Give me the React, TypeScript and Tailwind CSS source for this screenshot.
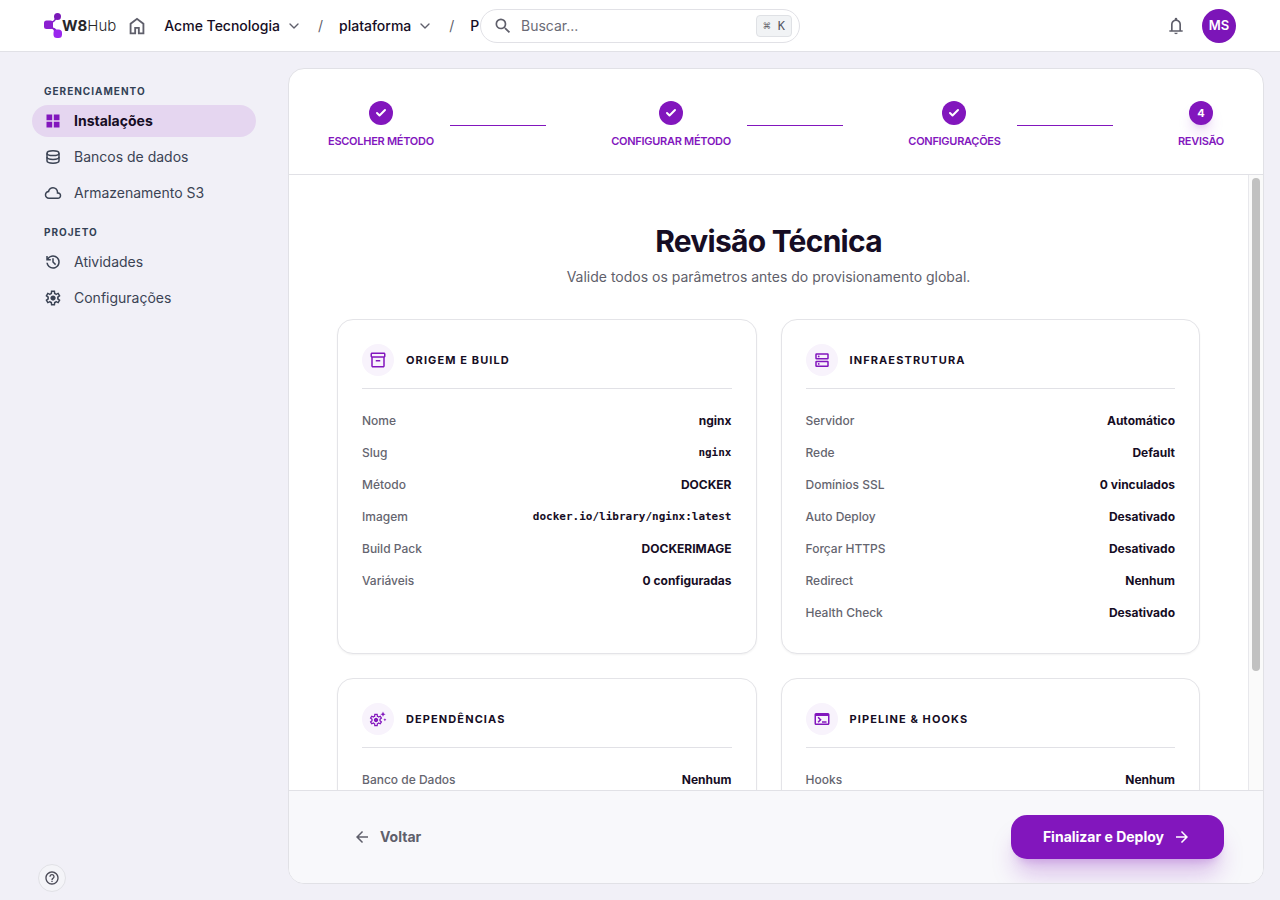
import type { ComponentType, ReactNode } from "react";
import clsx from "clsx";
import { Check, ChevronDown } from "lucide-react";
import {
  MdArrowBack,
  MdArrowForward,
  MdHelpOutline,
  MdOutlineInventory2,
  MdOutlineTerminal,
  MdSearch,
} from "react-icons/md";

interface IconProps {
  className?: string;
}

type IconType = ComponentType<IconProps>;

interface Row {
  label: string;
  value: string;
  mono?: boolean;
}

const gearPath =
  "m370-80-16-128q-13-5-24.5-12T307-235l-119 50L78-375l103-78q-1-7-1-13.5v-27q0-6.5 1-13.5L78-585l110-190 119 50q11-8 23-15t24-12l16-128h220l16 128q13 5 24.5 12t22.5 15l119-50 110 190-103 78q1 7 1 13.5v27q0 6.500-2 13.500l103 78-110 190-118-50q-11 8-23 15t-24 12L590-80H370Zm70-80h79l14-106q31-8 57.500-23.500T639-327l99 41 39-68-86-65q5-14 7-29.500t2-31.500q0-16-2-31.500t-7-29.500l86-65-39-68-99 42q-22-23-48.500-38.500T533-694l-13-106h-79l-14 106q-31 8-57.500 23.500T321-633l-99-41-39 68 86 64q-5 15-7 30t-2 32q0 16 2 31t7 30l-86 65 39 68 99-42q22 23 48.500 38.500T427-266l13 106Zm42-180q58 0 99-41t41-99q0-58-41-99t-99-41q-59 0-99.500 41T342-480q0 58 40.500 99t99.500 41Z";

const Symbol = ({ className, path }: IconProps & { path: string }) => (
  <svg className={className} viewBox="0 -960 960 960" fill="currentColor" aria-hidden="true">
    <path d={path} />
  </svg>
);

const HomeIcon = (props: IconProps) => (
  <Symbol
    {...props}
    path="M240-200h120v-240h240v240h120v-360L480-740 240-560v360Zm-80 80v-480l320-240 320 240v480H520v-240h-80v240H160Z"
  />
);

const BellIcon = (props: IconProps) => (
  <Symbol
    {...props}
    path="M160-200v-80h80v-280q0-83 50-147.500T420-792v-28q0-25 17.500-42.500T480-880q25 0 42.500 17.500T540-820v28q80 20 130 84.500T720-560v280h80v80H160ZM480-80q-33 0-56.500-23.500T400-160h160q0 33-23.500 56.500T480-80ZM320-280h320v-280q0-66-47-113t-113-47q-66 0-113 47t-47 113v280Z"
  />
);

const CloudIcon = (props: IconProps) => (
  <Symbol
    {...props}
    path="M260-160q-91 0-155.500-63T40-377q0-78 47-139t123-78q25-92 100-149t170-57q117 0 198.500 81.500T760-520q69 8 114.500 59.500T920-340q0 75-52.500 127.500T740-160H260Zm0-80h480q42 0 71-29t29-71q0-42-29-71t-71-29h-60v-80q0-83-58.500-141.500T480-720q-83 0-141.500 58.500T280-520h-20q-58 0-99 41t-41 99q0 58 41 99t99 41Z"
  />
);

const HistoryIcon = (props: IconProps) => (
  <Symbol
    {...props}
    path="M480-120q-138 0-240.500-91.500T122-440h82q14 104 92.500 172T480-200q117 0 198.500-81.500T760-480q0-117-81.500-198.500T480-760q-69 0-129 32t-101 88h110v80H120v-240h80v94q51-64 124.500-99T480-840q75 0 140.500 28.500t114 77q48.500 48.500 77 114T840-480q0 75-28.500 140.500t-77 114q-48.500 48.500-114 77T480-120Zm112-192L440-464v-216h80v184l128 128-56 56Z"
  />
);

const SettingsIcon = (props: IconProps) => <Symbol {...props} path={gearPath} />;

const GearSparkIcon = ({ className }: IconProps) => (
  <svg className={className} viewBox="0 0 18 18" fill="currentColor" aria-hidden="true">
    <path transform="translate(-0.44 17.44) scale(0.0155)" d={gearPath} />
    <path d="m14 1.600.8 1.800 1.800.8-1.800.8-.8 1.800-.8-1.800-1.800-.8 1.800-.8zM15.900 8.200l.5 1 1 .5-1 .5-.5 1-.5-1-1-.5 1-.5z" />
  </svg>
);

const GridIcon = ({ className }: IconProps) => (
  <svg className={className} viewBox="0 0 18 18" fill="currentColor" aria-hidden="true">
    <path d="M2.500 2.500h5.700v5.700H2.500zM9.800 2.500h5.700v5.700H9.800zM2.500 9.800h5.700v5.700H2.500zM9.800 9.800h5.700v5.700H9.800z" />
  </svg>
);

const DatabaseIcon = ({ className }: IconProps) => (
  <svg
    className={className}
    viewBox="0 0 18 18"
    fill="none"
    stroke="currentColor"
    strokeWidth="1.5"
    aria-hidden="true"
  >
    <ellipse cx="9" cy="5.200" rx="6" ry="2.400" />
    <path d="M3 5.200v7.600c0 1.300 2.700 2.400 6 2.400s6-1.100 6-2.400V5.200" />
    <path d="M3 9c0 1.300 2.700 2.400 6 2.400S15 10.300 15 9" />
  </svg>
);

const ServerIcon = ({ className }: IconProps) => (
  <svg className={className} viewBox="0 0 18 18" aria-hidden="true">
    <g fill="none" stroke="currentColor" strokeWidth="1.500">
      <rect x="3" y="3" width="12" height="4.800" rx="0.500" />
      <rect x="3" y="10.500" width="12" height="4.800" rx="0.500" />
    </g>
    <circle cx="5.700" cy="5.400" r="0.900" fill="currentColor" />
    <circle cx="5.700" cy="12.900" r="0.900" fill="currentColor" />
  </svg>
);

const Logo = () => (
  <a href="#" className="flex items-center text-[15px] leading-6 text-[#27272a]">
    <svg className="h-[26px] w-[18px] shrink-0" viewBox="0 0 18 26" aria-hidden="true">
      <path d="M6 8.500C9 8.500 10.500 7.500 11 4l2 2c-1.500 1-2 2.500-4 3.500v5c2 .5 3.500 1.500 4 3.500l-3 1c0-2-1-3.500-4-3.500z" fill="#8420cc" />
      <rect x="0" y="7.500" width="9" height="8.500" rx="2.500" fill="#8b1fd0" />
      <circle cx="13.500" cy="3.500" r="3.500" fill="#7a19b8" />
      <rect x="9.500" y="16.500" width="8.500" height="8.500" rx="3.500" fill="#9a27ee" />
    </svg>
    <span className="font-bold">W8</span>
    <span className="font-light">Hub</span>
  </a>
);

const crumbs = [
  { name: "Acme Tecnologia", menu: true },
  { name: "plataforma", menu: true },
  { name: "P", menu: false },
];

const Header = () => (
  <header className="relative flex h-[52px] shrink-0 items-center border-b border-[#e1e1e6] bg-white px-11">
    <Logo />
    <a href="#" aria-label="Início" className="ml-2.5 text-[#5f5f6b]">
      <HomeIcon className="size-[22px]" />
    </a>
    <nav aria-label="Contexto" className="ml-4 flex items-center text-sm font-medium text-[#160d24]">
      {crumbs.map((crumb, index) => (
        <div key={crumb.name} className="flex items-center">
          {index > 0 && <span className="mx-4 font-normal text-[#5f5f6b]">/</span>}
          <button type="button" className="flex items-center gap-1.5">
            {crumb.name}
            {crumb.menu && <ChevronDown className="size-4 text-[#5f5f6b]" strokeWidth={2} />}
          </button>
        </div>
      ))}
    </nav>
    <label className="absolute left-1/2 flex h-[34px] w-80 -translate-x-1/2 items-center rounded-full border border-[#e1e1e6] bg-white pr-[7px] pl-3">
      <MdSearch className="size-5 shrink-0 text-[#5f5f6b]" />
      <input
        type="text"
        aria-label="Buscar"
        placeholder="Buscar..."
        className="ml-2 min-w-0 flex-1 bg-transparent text-sm outline-none placeholder:text-[#6b6b76]"
      />
      <kbd className="flex h-[22px] items-center rounded border border-[#dfe1e5] bg-[#f1f3f5] px-1.5 font-['DejaVu_Sans_Mono',monospace] text-xs text-[#55555f]">
        ⌘ K
      </kbd>
    </label>
    <button type="button" aria-label="Notificações" className="ml-auto text-[#5f5f6b]">
      <BellIcon className="size-5" />
    </button>
    <button
      type="button"
      className="ml-4 size-[34px] rounded-full bg-[#7c15b8] text-[13px] font-semibold text-white"
    >
      MS
    </button>
  </header>
);

const NavItem = ({ icon: Icon, label, active }: { icon: IconType; label: string; active?: boolean }) => (
  <a
    href="#"
    aria-current={active ? "page" : undefined}
    className={clsx(
      "flex h-8 items-center gap-3 rounded-full px-3 text-sm",
      active ? "bg-[#e5d6f0] font-bold text-[#160d24]" : "text-[#3b4354]"
    )}
  >
    <Icon className={clsx("size-[18px] shrink-0", active && "text-[#8216bd]")} />
    {label}
  </a>
);

const NavGroup = ({ title, children }: { title: string; children: ReactNode }) => (
  <div>
    <h2 className="mb-1.5 px-3 text-[10px] leading-4 font-bold tracking-widest text-[#334155]">{title}</h2>
    <div className="flex flex-col gap-1">{children}</div>
  </div>
);

const Sidebar = () => (
  <aside className="flex w-72 shrink-0 flex-col justify-between px-8 pt-[31px] pb-2">
    <nav aria-label="Principal" className="flex flex-col gap-[15px]">
      <NavGroup title="GERENCIAMENTO">
        <NavItem icon={GridIcon} label="Instalações" active />
        <NavItem icon={DatabaseIcon} label="Bancos de dados" />
        <NavItem icon={CloudIcon} label="Armazenamento S3" />
      </NavGroup>
      <NavGroup title="PROJETO">
        <NavItem icon={HistoryIcon} label="Atividades" />
        <NavItem icon={SettingsIcon} label="Configurações" />
      </NavGroup>
    </nav>
    <button
      type="button"
      aria-label="Ajuda"
      className="ml-1.5 flex size-7 items-center justify-center rounded-full border border-[#e1e1e6] bg-[#f4f4f8] text-[#4b4b57]"
    >
      <MdHelpOutline className="size-4" />
    </button>
  </aside>
);

const steps = ["ESCOLHER MÉTODO", "CONFIGURAR MÉTODO", "CONFIGURAÇÕES", "REVISÃO"];

const Stepper = () => (
  <ol className="flex justify-between border-b border-[#e1e1e6] px-[39px] pt-8 pb-6">
    {steps.map((step, index) => {
      const last = index === steps.length - 1;
      return (
        <li key={step} className="flex items-center gap-4">
          <div className="flex flex-col items-center gap-2 text-[11px] leading-[17px] font-semibold text-[#8216bd]">
            <span
              className={clsx(
                "flex size-6 items-center justify-center rounded-full bg-[#8216bd] text-white",
                last && "font-bold shadow-lg shadow-[#8216bd]/20"
              )}
            >
              {last ? index + 1 : <Check className="size-3" strokeWidth={4} />}
            </span>
            <span className="tracking-tight">{step}</span>
          </div>
          {!last && <span className="h-px w-24 bg-[#8216bd]" />}
        </li>
      );
    })}
  </ol>
);

const ReviewCard = ({ icon: Icon, title, rows }: { icon: IconType; title: string; rows: Row[] }) => (
  <section className="rounded-2xl border border-[#e4e4e8] bg-white p-6 shadow-xs">
    <div className="mb-4 flex items-center gap-3 border-b border-[#e1e1e6] pb-3">
      <span className="flex size-8 items-center justify-center rounded-full bg-[#f8f3fc] text-[#8216bd]">
        <Icon className="size-[18px]" />
      </span>
      <h3 className="text-[11px] leading-4 font-bold tracking-widest text-[#160d24]">{title}</h3>
    </div>
    <dl>
      {rows.map((row) => (
        <div key={row.label} className="flex justify-between py-2 text-xs">
          <dt className="font-medium text-[#65656f]">{row.label}</dt>
          <dd
            className={clsx(
              "font-bold text-[#160d24]",
              row.mono && "font-['DejaVu_Sans_Mono',monospace] text-[11px] leading-4"
            )}
          >
            {row.value}
          </dd>
        </div>
      ))}
    </dl>
  </section>
);

const cards: { icon: IconType; title: string; rows: Row[] }[] = [
  {
    icon: MdOutlineInventory2,
    title: "ORIGEM E BUILD",
    rows: [
      { label: "Nome", value: "nginx" },
      { label: "Slug", value: "nginx", mono: true },
      { label: "Método", value: "DOCKER" },
      { label: "Imagem", value: "docker.io/library/nginx:latest", mono: true },
      { label: "Build Pack", value: "DOCKERIMAGE" },
      { label: "Variáveis", value: "0 configuradas" },
    ],
  },
  {
    icon: ServerIcon,
    title: "INFRAESTRUTURA",
    rows: [
      { label: "Servidor", value: "Automático" },
      { label: "Rede", value: "Default" },
      { label: "Domínios SSL", value: "0 vinculados" },
      { label: "Auto Deploy", value: "Desativado" },
      { label: "Forçar HTTPS", value: "Desativado" },
      { label: "Redirect", value: "Nenhum" },
      { label: "Health Check", value: "Desativado" },
    ],
  },
  {
    icon: GearSparkIcon,
    title: "DEPENDÊNCIAS",
    rows: [{ label: "Banco de Dados", value: "Nenhum" }],
  },
  {
    icon: MdOutlineTerminal,
    title: "PIPELINE & HOOKS",
    rows: [{ label: "Hooks", value: "Nenhum" }],
  },
];

const App = () => {
  return (
    <div className="flex h-screen flex-col bg-[#f1f0f7] font-['Inter',sans-serif]">
      <Header />
      <div className="flex min-h-0 flex-1">
        <Sidebar />
        <main className="mt-4 mr-4 mb-4 flex min-w-0 flex-1 flex-col overflow-hidden rounded-2xl border border-[#e1e1e6] bg-white">
          <Stepper />
          <div className="flex min-h-0 flex-1">
            <div className="min-w-0 flex-1 overflow-y-auto p-12 [scrollbar-width:none]">
              <h1 className="text-center text-3xl font-bold tracking-tight text-[#160d24]">Revisão Técnica</h1>
              <p className="mt-2 text-center text-sm text-[#5f5f6b]">
                Valide todos os parâmetros antes do provisionamento global.
              </p>
              <div className="mt-8 grid grid-cols-2 gap-6">
                {cards.map((card) => (
                  <ReviewCard key={card.title} {...card} />
                ))}
              </div>
            </div>
            <div className="w-[15px] border-l border-[#e8e8ec] bg-[#fafafa] p-[3px]">
              <div className="h-[81%] w-2 rounded-full bg-[#c1c1c1]" />
            </div>
          </div>
          <footer className="flex items-center justify-between border-t border-[#e1e1e6] bg-[#f8f8fb] px-[39px] py-6">
            <button type="button" className="flex h-11 items-center gap-2 px-6 text-sm font-bold text-[#5f5f6b]">
              <MdArrowBack className="size-5 p-px" />
              Voltar
            </button>
            <button
              type="button"
              className="flex h-11 items-center gap-2 rounded-2xl bg-[#8216bd] px-8 text-sm font-bold text-white shadow-xl shadow-[#8216bd]/25"
            >
              Finalizar e Deploy
              <MdArrowForward className="size-5 p-px" />
            </button>
          </footer>
        </main>
      </div>
    </div>
  );
};

export default App;
